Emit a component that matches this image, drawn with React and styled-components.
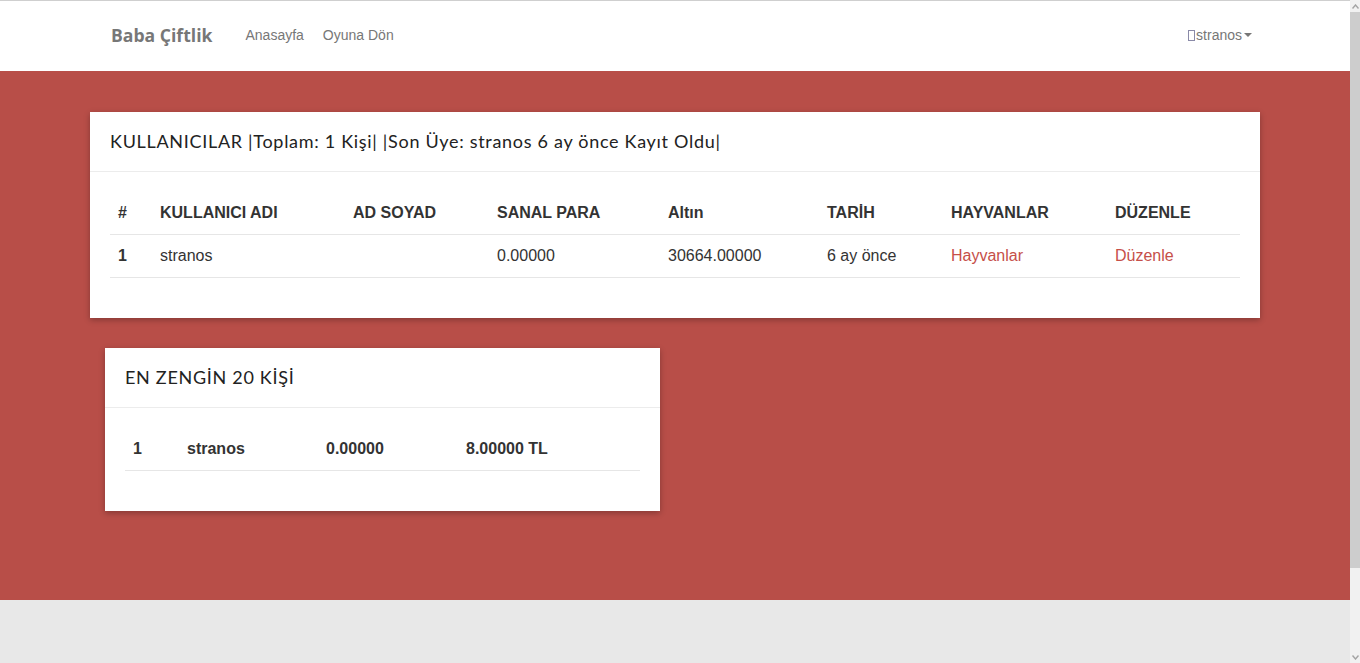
import React from 'react'
import styled, { createGlobalStyle } from 'styled-components'

const GlobalStyle = createGlobalStyle`
    html, body {
        margin: 0;
        padding: 0;
        overflow: hidden;
    }
    body {
        background: #e8e8e8;
        font-family: "Liberation Sans", Arial, sans-serif;
        font-size: 14px;
        color: #333;
    }
`

const users = [
    { id: 1, name: 'stranos', fullName: '', money: '0.00000', gold: '30664.00000', date: '6 ay önce' },
]

const richest = [
    { id: 1, name: 'stranos', money: '0.00000', total: '8.00000 TL' },
]

const Shell = styled.div`
    display: flex;
    height: 100vh;
`

const Page = styled.div`
    flex: 1;
    min-width: 0;
    overflow: hidden;
`

const ScrollBar = styled.aside`
    width: 10px;
    height: 100%;
    background: #f1f1f1;
    display: flex;
    flex-direction: column;
`

const ScrollArrow = styled.div`
    height: 12px;
    display: flex;
    align-items: center;
    justify-content: center;
`

const ScrollTrack = styled.div`
    flex: 1;
    display: flex;
    flex-direction: column;
`

const ScrollThumb = styled.div`
    height: 556px;
    background: #cdcdcd;
`

const NavWrapper = styled.nav`
    background: #fff;
    border-top: 1px solid #cfcfcf;
    height: 70px;
`

const Container = styled.div`
    width: 1170px;
    margin: 0 auto;
    box-sizing: border-box;
`

const NavInner = styled(Container)`
    display: flex;
    align-items: center;
    height: 100%;
    padding: 0 8px 2px 21px;
`

const Brand = styled.a`
    font-family: "Open Sans", sans-serif;
    font-weight: 700;
    font-size: 17.6px;
    color: #777;
    text-decoration: none;
    margin-right: 33px;
`

const NavLinks = styled.ul`
    display: flex;
    gap: 19px;
    list-style: none;
    margin: 0;
    padding: 0;
`

const NavLink = styled.a`
    color: #777;
    font-size: 14px;
    text-decoration: none;
`

const UserMenu = styled.a`
    margin-left: auto;
    display: flex;
    align-items: center;
    color: #777;
    font-size: 14px;
    text-decoration: none;
`

const Tofu = styled.span`
    display: inline-block;
    width: 7px;
    height: 11px;
    border: 1px solid #8a8aa8;
    box-sizing: border-box;
    margin-right: 1px;
`

const Caret = styled.span`
    display: inline-block;
    width: 0;
    height: 0;
    margin-left: 2px;
    border-top: 4px solid #777;
    border-left: 4px solid transparent;
    border-right: 4px solid transparent;
`

const Main = styled.section`
    background: #b84e48;
    height: 529px;
    padding-top: 41px;
    box-sizing: border-box;
`

const Card = styled.div`
    background: #fff;
    box-shadow: 0 2px 6px rgba(0, 0, 0, 0.28);
    margin: ${p => p.$inset ? '0 15px' : '0'};
    width: ${p => p.$half ? '555px' : 'auto'};
`

const CardHeader = styled.div`
    font-family: Lato, "Noto Sans", sans-serif;
    font-size: 18px;
    letter-spacing: 0.7px;
    color: #222;
    padding: 0 20px;
    height: 59px;
    line-height: 59px;
    border-bottom: 1px solid #ececec;
`

const CardBody = styled.div`
    padding: 20px;
`

const Table = styled.table`
    width: 100%;
    border-collapse: collapse;
    margin-bottom: 20px;
    font-size: 16px;
    table-layout: fixed;
`

const Th = styled.th`
    text-align: left;
    font-weight: 700;
    padding: 10px 8px;
    line-height: 22px;
    color: #333;
    border-bottom: 1px solid #e6e6e6;
`

const Td = styled.td`
    padding: 10px 8px;
    line-height: 22px;
    border-bottom: 1px solid #e6e6e6;
    font-weight: ${p => p.$bold ? 700 : 400};
    color: #333;
`

const TableLink = styled.a`
    color: #c64f49;
    text-decoration: none;
`

const Spacer = styled.div`
    height: 30px;
`

const cols = [42, 193, 144, 171, 159, 124, 164, 133]
const richCols = [54, 139, 140, 182]

const Chevron = ({ up }) => (
    <svg width="7" height="5" viewBox="0 0 7 5">
        <polyline
            points={up ? '0.5,4.5 3.5,1 6.5,4.5' : '0.5,0.5 3.5,4 6.5,0.5'}
            fill="none"
            stroke="#a3a3a3"
            strokeWidth="1.4"
        />
    </svg>
)

export default function App() {
    return (
        <>
            <GlobalStyle />
            <Shell>
                <Page>
                    <NavWrapper>
                        <NavInner>
                            <Brand href="#">Baba Çiftlik</Brand>
                            <NavLinks>
                                <li><NavLink href="#">Anasayfa</NavLink></li>
                                <li><NavLink href="#">Oyuna Dön</NavLink></li>
                            </NavLinks>
                            <UserMenu href="#">
                                <Tofu />stranos<Caret />
                            </UserMenu>
                        </NavInner>
                    </NavWrapper>
                    <Main>
                        <Container>
                            <Card>
                                <CardHeader>KULLANICILAR |Toplam: 1 Kişi| |Son Üye: stranos 6 ay önce Kayıt Oldu|</CardHeader>
                                <CardBody>
                                    <Table>
                                        <colgroup>
                                            {cols.map((w, i) => <col key={i} style={{ width: w }} />)}
                                        </colgroup>
                                        <thead>
                                            <tr>
                                                <Th>#</Th>
                                                <Th>KULLANICI ADI</Th>
                                                <Th>AD SOYAD</Th>
                                                <Th>SANAL PARA</Th>
                                                <Th>Altın</Th>
                                                <Th>TARİH</Th>
                                                <Th>HAYVANLAR</Th>
                                                <Th>DÜZENLE</Th>
                                            </tr>
                                        </thead>
                                        <tbody>
                                            {users.map(u => (
                                                <tr key={u.id}>
                                                    <Td $bold>{u.id}</Td>
                                                    <Td>{u.name}</Td>
                                                    <Td>{u.fullName}</Td>
                                                    <Td>{u.money}</Td>
                                                    <Td>{u.gold}</Td>
                                                    <Td>{u.date}</Td>
                                                    <Td><TableLink href="#">Hayvanlar</TableLink></Td>
                                                    <Td><TableLink href="#">Düzenle</TableLink></Td>
                                                </tr>
                                            ))}
                                        </tbody>
                                    </Table>
                                </CardBody>
                            </Card>
                            <Spacer />
                            <Card $inset $half>
                                <CardHeader>EN ZENGİN 20 KİŞİ</CardHeader>
                                <CardBody>
                                    <Table>
                                        <colgroup>
                                            {richCols.map((w, i) => <col key={i} style={{ width: w }} />)}
                                        </colgroup>
                                        <tbody>
                                            {richest.map(r => (
                                                <tr key={r.id}>
                                                    <Td $bold>{r.id}</Td>
                                                    <Td $bold>{r.name}</Td>
                                                    <Td $bold>{r.money}</Td>
                                                    <Td $bold>{r.total}</Td>
                                                </tr>
                                            ))}
                                        </tbody>
                                    </Table>
                                </CardBody>
                            </Card>
                        </Container>
                    </Main>
                </Page>
                <ScrollBar>
                    <ScrollArrow><Chevron up /></ScrollArrow>
                    <ScrollTrack>
                        <ScrollThumb />
                    </ScrollTrack>
                    <ScrollArrow><Chevron /></ScrollArrow>
                </ScrollBar>
            </Shell>
        </>
    )
}
